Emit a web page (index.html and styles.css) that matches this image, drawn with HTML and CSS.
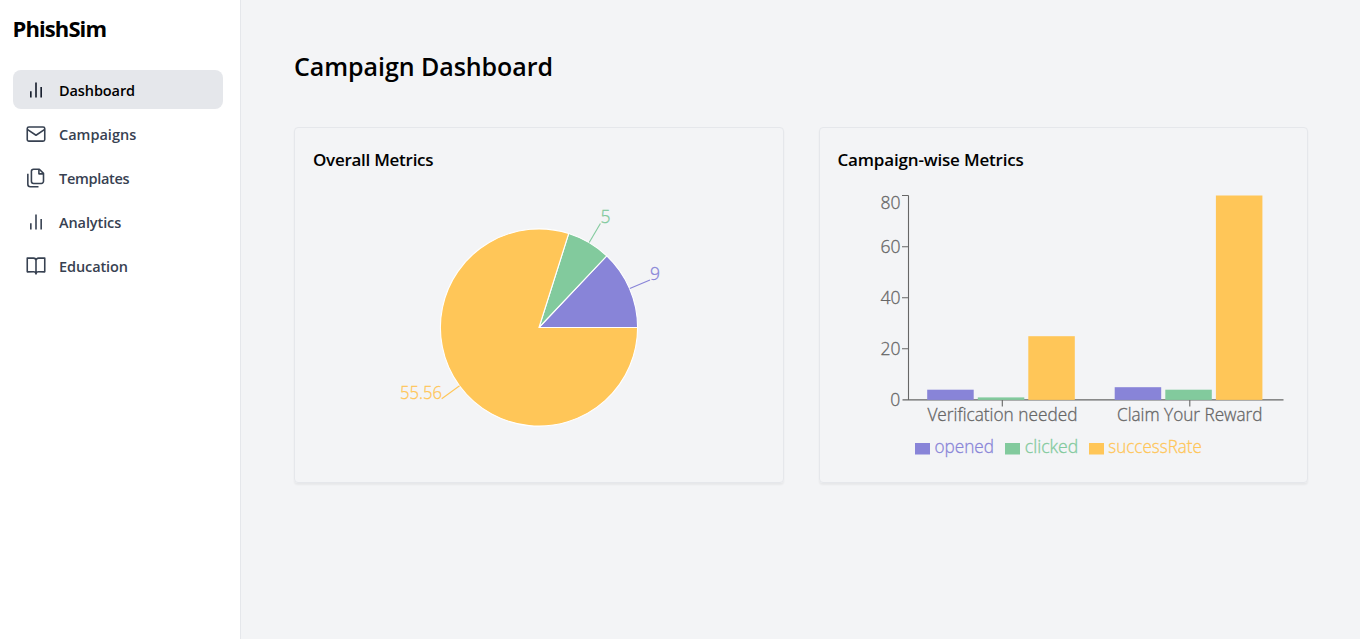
FILE: index.html
```html
<!DOCTYPE html>
<html lang="en">
<head>
<meta charset="utf-8">
<title>PhishSim</title>
<link rel="stylesheet" href="styles.css">
</head>
<body>
<div class="app">
  <aside class="sidebar">
    <div class="brand"><span>PhishSim</span></div>
    <nav class="nav">
      <a class="nav-item active">
        <svg class="icon" viewBox="0 0 24 24"><path d="M5.800 21v-7.500M12 21V3M18.200 21V8.500"/></svg>
        <span class="t-dashboard">Dashboard</span>
      </a>
      <a class="nav-item">
        <svg class="icon" viewBox="0 0 24 24"><rect x="1.500" y="3.500" width="21" height="17" rx="2"/><path d="M1.500 6.500 12 13.500l10.500-7"/></svg>
        <span class="t-campaigns">Campaigns</span>
      </a>
      <a class="nav-item">
        <svg class="icon" viewBox="0 0 24 24"><path d="M16 1.500H9a2.500 2.500 0 0 0-2.500 2.500v12A2.500 2.500 0 0 0 9 18.500h9.500A2.500 2.500 0 0 0 21 16V6.500z"/><path d="M15.500 1.500v5.500H21M2.200 7v12.500A3 3 0 0 0 5.200 22.500H15"/></svg>
        <span class="t-templates">Templates</span>
      </a>
      <a class="nav-item">
        <svg class="icon" viewBox="0 0 24 24"><path d="M5.800 21v-7.500M12 21V3M18.200 21V8.500"/></svg>
        <span class="t-analytics">Analytics</span>
      </a>
      <a class="nav-item">
        <svg class="icon" viewBox="0 0 24 24"><path d="M1.500 2.500H9a3 3 0 0 1 3 3v16a3 3 0 0 0-3-2.500H1.500zM22.500 2.500H15a3 3 0 0 0-3 3v16a3 3 0 0 1 3-2.500h7.500z"/></svg>
        <span class="t-education">Education</span>
      </a>
    </nav>
  </aside>
  <main class="main">
    <h1 class="title"><span>Campaign Dashboard</span></h1>
    <div class="cards">
      <section class="card">
        <h2 class="card-title t-overall"><span>Overall Metrics</span></h2>
        <svg class="chart" width="454" height="288" viewBox="312 178 454 288">
          <g class="slices">
            <path class="purple" d="M539 327.500L637.600 327.500A98.600 98.600 0 0 0 606.770 255.880Z"/>
            <path class="green" d="M539 327.500L606.770 255.880A98.600 98.600 0 0 0 568.710 233.480Z"/>
            <path class="orange" d="M539 327.500L568.710 233.480A98.600 98.600 0 1 0 637.600 327.500Z"/>
          </g>
          <path class="lead purple-line" d="M629.800 288.500L650 279.900"/>
          <path class="lead green-line" d="M589.200 242.500L600.400 223.500"/>
          <path class="lead orange-line" d="M459.600 385.700L441.700 398.800"/>
          <text class="label purple purple-line" x="650" y="280" textLength="10" lengthAdjust="spacingAndGlyphs">9</text>
          <text class="label green green-line" x="600.500" y="223" textLength="10" lengthAdjust="spacingAndGlyphs">5</text>
          <text class="label orange orange-line" x="400" y="399" textLength="42" lengthAdjust="spacingAndGlyphs">55.56</text>
        </svg>
      </section>
      <section class="card">
        <h2 class="card-title t-wise"><span>Campaign-wise Metrics</span></h2>
        <svg class="chart" width="452" height="288" viewBox="837 178 452 288">
          <path class="axis" d="M902.500 399.900H1283.500M1002.300 399.900v6.500M1189.800 399.900v6.500M908.500 195.500V399.900M902 195.500h6.500M902 246.700h6.500M902 297.800h6.500M902 348.800h6.500"/>
          <rect class="purple" x="927.200" y="389.700" width="46.500" height="10.200"/>
          <rect class="green" x="977.800" y="397.400" width="46.500" height="2.500"/>
          <rect class="orange" x="1028.300" y="336.200" width="46.500" height="63.700"/>
          <rect class="purple" x="1114.700" y="387.200" width="46.500" height="12.700"/>
          <rect class="green" x="1165.300" y="389.700" width="46.500" height="10.200"/>
          <rect class="orange" x="1215.900" y="195.500" width="46.500" height="204.400"/>
          <g class="label tick">
            <text x="880.500" y="209" textLength="20" lengthAdjust="spacingAndGlyphs">80</text>
            <text x="880.500" y="253" textLength="20" lengthAdjust="spacingAndGlyphs">60</text>
            <text x="880.500" y="304" textLength="20" lengthAdjust="spacingAndGlyphs">40</text>
            <text x="880.500" y="355" textLength="20" lengthAdjust="spacingAndGlyphs">20</text>
            <text x="890.300" y="406" textLength="10" lengthAdjust="spacingAndGlyphs">0</text>
            <text x="927.400" y="421" textLength="150" lengthAdjust="spacingAndGlyphs">Verification needed</text>
            <text x="1117" y="421" textLength="145.500" lengthAdjust="spacingAndGlyphs">Claim Your Reward</text>
          </g>
          <rect class="purple" x="915" y="443" width="15" height="11.500"/>
          <rect class="green" x="1005" y="443" width="15" height="11.500"/>
          <rect class="orange" x="1089" y="443" width="15" height="11.500"/>
          <text class="label purple purple-line" x="934.500" y="453" textLength="59.500" lengthAdjust="spacingAndGlyphs">opened</text>
          <text class="label green green-line" x="1024.800" y="453" textLength="53.500" lengthAdjust="spacingAndGlyphs">clicked</text>
          <text class="label orange orange-line" x="1108.300" y="453" textLength="93.500" lengthAdjust="spacingAndGlyphs">successRate</text>
        </svg>
      </section>
    </div>
  </main>
</div>
</body>
</html>
```
FILE: styles.css
```css
* { box-sizing: border-box; }
body { margin: 0; font-family: "Open Sans", "Noto Sans", sans-serif; color: #000; background: #f3f4f6; }
.app { display: flex; height: 639px; overflow: hidden; }
.sidebar { width: 241px; flex: none; background: #fff; border-right: 1px solid #e5e7eb; padding: 13px 17px 0 13px; }
.brand { font-size: 22px; font-weight: 700; line-height: 30px; height: 57px; letter-spacing: -0.9px; margin-left: -0.5px; }
.nav { display: flex; flex-direction: column; gap: 5px; }
.nav-item { display: flex; align-items: center; gap: 13px; height: 39px; padding: 1px 13px 0; border-radius: 8px; color: #374151; font-size: 14.5px; font-weight: 600; letter-spacing: -0.1px; white-space: nowrap; }
.nav-item.active { background: #e5e7eb; color: #000; }
.t-campaigns { letter-spacing: 0; }
.t-templates { letter-spacing: -0.3px; }
.icon { width: 20px; height: 20px; margin-top: -1px; fill: none; stroke: #374151; stroke-width: 1.9; stroke-linejoin: round; }
.active .icon { stroke: #111827; }
.main { flex: 1; padding: 48px 52px 0 53px; }
.title { margin: 0 0 43px; font-size: 25px; font-weight: 600; line-height: 36px; letter-spacing: -0.06px; }
.cards { display: grid; grid-template-columns: 490px 489px; gap: 35px; }
.card { height: 356px; border: 1px solid #e5e7eb; border-radius: 4px; padding: 17px 17px 0 18px; box-shadow: 0 2px 2px rgba(0,0,0,.05); }
.card-title { margin: 0; height: 33px; line-height: 30px; font-size: 17px; font-weight: 600; letter-spacing: -0.27px; white-space: nowrap; }
.t-wise { margin-left: -0.5px; letter-spacing: -0.17px; }
.chart { display: block; margin-left: -1px; overflow: visible; }
.label { font-size: 18px; font-weight: 300; stroke-width: 0.3; }
.purple { fill: #8884d8; }
.green { fill: #82ca9d; }
.orange { fill: #ffc658; }
.tick { fill: #666; stroke: #666; }
.slices path { stroke: #fff; stroke-width: 1.1; }
.lead { fill: none; stroke-width: 1.1; }
.purple-line { stroke: #8884d8; }
.green-line { stroke: #82ca9d; }
.orange-line { stroke: #ffc658; }
.axis { fill: none; stroke: #666; stroke-width: 1.1; }
```
